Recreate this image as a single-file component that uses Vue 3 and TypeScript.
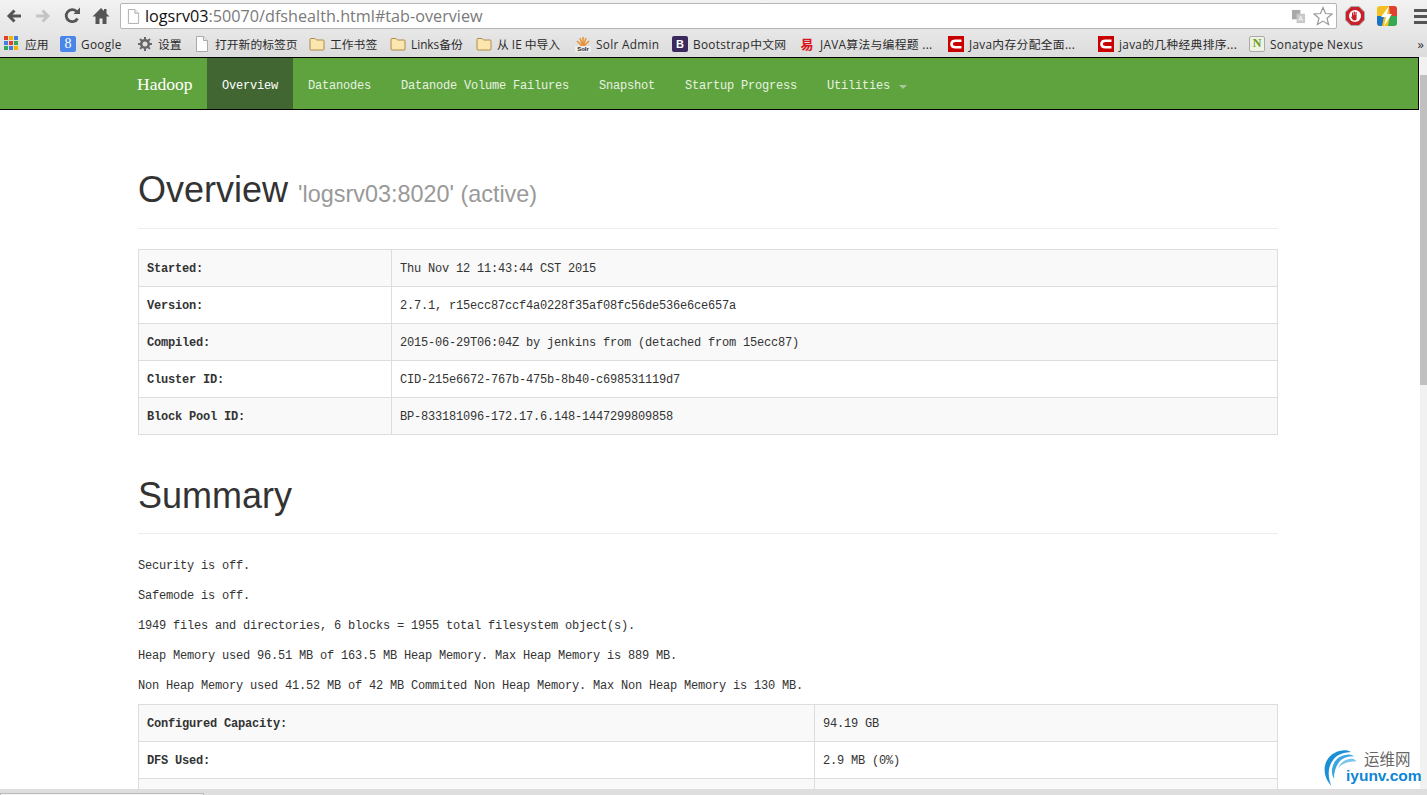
<script setup lang="ts">
interface Bm { icon: string; label: string; width: number; wide?: boolean }
const bookmarks: Bm[] = [
  { icon: 'apps', label: '应用', width: 56 },
  { icon: 'g', label: 'Google', width: 77, wide: true },
  { icon: 'gear', label: '设置', width: 57 },
  { icon: 'doc', label: '打开新的标签页', width: 115 },
  { icon: 'folder', label: '工作书签', width: 81 },
  { icon: 'folder', label: 'Links备份', width: 86 },
  { icon: 'folder', label: '从 IE 中导入', width: 99 },
  { icon: 'solr', label: 'Solr Admin', width: 97, wide: true },
  { icon: 'b', label: 'Bootstrap中文网', width: 127, wide: true },
  { icon: 'yi', label: 'JAVA算法与编程题 ...', width: 149, wide: true },
  { icon: 'c', label: 'Java内存分配全面...', width: 150, wide: true },
  { icon: 'c', label: 'java的几种经典排序...', width: 151, wide: true },
  { icon: 'n', label: 'Sonatype Nexus', width: 120, wide: true },
]
const appColors = ['#e2402f', '#f4b400', '#3f7fe0', '#3f7fe0', '#e2402f', '#34a853', '#34a853', '#3f7fe0', '#f4b400']
const navItems = ['Datanodes', 'Datanode Volume Failures', 'Snapshot', 'Startup Progress']
const overview = [
  ['Started:', 'Thu Nov 12 11:43:44 CST 2015'],
  ['Version:', '2.7.1, r15ecc87ccf4a0228f35af08fc56de536e6ce657a'],
  ['Compiled:', '2015-06-29T06:04Z by jenkins from (detached from 15ecc87)'],
  ['Cluster ID:', 'CID-215e6672-767b-475b-8b40-c698531119d7'],
  ['Block Pool ID:', 'BP-833181096-172.17.6.148-1447299809858'],
]
const summaryLines = [
  'Security is off.',
  'Safemode is off.',
  '1949 files and directories, 6 blocks = 1955 total filesystem object(s).',
  'Heap Memory used 96.51 MB of 163.5 MB Heap Memory. Max Heap Memory is 889 MB.',
  'Non Heap Memory used 41.52 MB of 42 MB Commited Non Heap Memory. Max Non Heap Memory is 130 MB.',
]
const capacity = [
  ['Configured Capacity:', '94.19 GB'],
  ['DFS Used:', '2.9 MB (0%)'],
  ['', ''],
]
</script>

<template>
  <div class="window">
    <header class="toolbar">
      <svg class="tool" viewBox="0 0 20 20"><path d="M17 10H6M10.500 4.500 5 10l5.500 5.500" fill="none" stroke="#555" stroke-width="3" /></svg>
      <svg class="tool" viewBox="0 0 20 20"><path d="M3 10h11M9.500 4.500 15 10l-5.500 5.500" fill="none" stroke="#c4c4c4" stroke-width="3" /></svg>
      <svg class="tool" viewBox="0 0 20 20"><path d="M15.500 12.500A6 6 0 1 1 14.500 5.500" fill="none" stroke="#555" stroke-width="2.800" /><path d="M11.500 8H18V1.500z" fill="#555" /></svg>
      <svg class="tool" viewBox="0 0 20 20"><path d="M10 2 1.500 10.500H4.500V18H8.500V12.500H11.500V18H15.500V10.500H18.500L15.500 7.500V3H13V5z" fill="#555" /></svg>
      <div class="omnibox">
        <svg class="page-icon" viewBox="0 0 14 16"><path d="M1.500.5h7l4 4v11h-11z" fill="#fff" stroke="#aaa" /><path d="M8.500.5v4h4" fill="#eee" stroke="#aaa" /></svg>
        <span class="url"><span class="host">logsrv03</span>:50070/dfshealth.html#tab-overview</span>
        <svg class="translate" viewBox="0 0 16 16"><rect x="1" y="1" width="9" height="10" fill="#a9a9a9" /><rect x="6" y="5" width="9" height="10" fill="#c8c8c8" /><text x="8" y="13" font-size="7" fill="#fff" font-family="Liberation Sans, sans-serif">A</text></svg>
        <svg class="star" viewBox="0 0 20 20"><path d="M10 1.500 12.500 7.500 19 8l-5 4.200 1.600 6.300L10 15.100 4.400 18.500 6 12.200 1 8l6.500-.5z" fill="#fff" stroke="#999" stroke-width="1.200" /></svg>
      </div>
      <svg class="ext first" viewBox="0 0 20 20"><path d="M6 .5h8L19.500 6v8L14 19.500H6L.5 14V6z" fill="#c9212a" stroke="#aaa" /><circle cx="10" cy="10" r="6" fill="#fff" /><path d="M7 9V6.500h1.200V9h.5V5.500h1.200V9h.5V6h1.200v5.500C12 13.500 11 14.500 9.500 14.500 8 14.500 7.500 13.500 6 11L7 10.500z" fill="#c9212a" /></svg>
      <svg class="ext" viewBox="0 0 20 20"><rect width="20" height="20" rx="3" fill="#f4c020" /><path d="M0 10h7L5 20H3a3 3 0 0 1-3-3z" fill="#1a73c8" /><path d="M12 0h5a3 3 0 0 1 3 3v7h-7z" fill="#e2402f" /><path d="M11 20l2-10h7v7a3 3 0 0 1-3 3z" fill="#34a853" /><path d="M12 0 4 11h5l-2 9 8-12h-5z" fill="#fff" /></svg>
      <div class="menu"><i></i><i></i><i></i></div>
    </header>

    <nav class="bookmarks">
      <div v-for="(b, i) in bookmarks" :key="i" class="bm" :style="{ width: b.width + 'px' }">
        <span v-if="b.icon === 'apps'" class="apps"><i v-for="(c, j) in appColors" :key="j" :style="{ background: c }"></i></span>
        <span v-else-if="b.icon === 'g'" class="bm-icon g">8</span>
        <svg v-else-if="b.icon === 'gear'" class="bm-svg" viewBox="0 0 16 16"><circle cx="8" cy="8" r="3.800" fill="none" stroke="#666" stroke-width="2.600" /><path d="M8 1v14M1 8h14M3 3l10 10M13 3 3 13" stroke="#666" stroke-width="2" stroke-dasharray="2.500 9" /></svg>
        <svg v-else-if="b.icon === 'doc'" class="bm-svg" viewBox="0 0 16 16"><path d="M2.500 .5h7l4 4v11h-11z" fill="#fdfdfd" stroke="#aaa" /><path d="M9.500 .5v4h4" fill="#e8e8e8" stroke="#aaa" /></svg>
        <svg v-else-if="b.icon === 'folder'" class="bm-svg" viewBox="0 0 16 16"><path d="M1 3.500Q1 2.500 2 2.500H6L7.500 4H14Q15 4 15 5V13Q15 14 14 14H2Q1 14 1 13z" fill="#fbe7ae" stroke="#b08a4a" /></svg>
        <svg v-else-if="b.icon === 'solr'" class="bm-svg" viewBox="0 0 16 16"><path d="M8 11 2 5M8 11 5 2M8 11 8 1M8 11 11 2M8 11 14 5" stroke="#e8963c" stroke-width="1.600" /><rect x="0" y="10" width="16" height="6" fill="#eee" /><text x="8" y="15" text-anchor="middle" font-size="6" font-weight="700" fill="#222" font-family="Liberation Sans, sans-serif">Solr</text></svg>
        <span v-else-if="b.icon === 'b'" class="bm-icon boot">B</span>
        <span v-else-if="b.icon === 'yi'" class="bm-icon yi">易</span>
        <svg v-else-if="b.icon === 'c'" class="bm-svg" viewBox="0 0 16 16"><rect width="16" height="16" fill="#c80000" /><path d="M13.500 4.800H7.500Q3.500 4.800 3.500 8T7.500 11.200H13.500" fill="none" stroke="#fff" stroke-width="2.600" /></svg>
        <span v-else class="bm-icon nexus">N</span>
        <span class="bm-label" :class="{ wide: b.wide }">{{ b.label }}</span>
      </div>
      <span class="more">»</span>
    </nav>

    <div class="viewport">
      <div class="page">
        <div class="navbar">
          <span class="brand">Hadoop</span>
          <a class="nav-link active">Overview</a>
          <a v-for="n in navItems" :key="n" class="nav-link">{{ n }}</a>
          <a class="nav-link">Utilities<span class="caret"></span></a>
        </div>

        <main class="content">
          <div class="page-header first-header">
            <h1>Overview <small>'logsrv03:8020' (active)</small></h1>
          </div>
          <table class="grid">
            <tr v-for="r in overview" :key="r[0]">
              <th class="col-a">{{ r[0] }}</th>
              <td>{{ r[1] }}</td>
            </tr>
          </table>

          <div class="page-header summary-header">
            <h1>Summary</h1>
          </div>
          <p v-for="l in summaryLines" :key="l" class="line">{{ l }}</p>
          <table class="grid">
            <tr v-for="(r, i) in capacity" :key="i">
              <th class="col-b">{{ r[0] }}</th>
              <td>{{ r[1] }}</td>
            </tr>
          </table>
        </main>
      </div>
      <div class="scrollbar">
        <span class="arrow"></span>
        <div class="thumb"></div>
      </div>
      <div class="watermark">
        <svg class="wm-arc" viewBox="0 0 50 46"><path d="M25 2C10 3 1 14 2 27c.6 7 3 12 8 17C6 35 5 24 11 15 15 9 20 5 33 4 30 2 28 2 25 2z" fill="#1b8fd6" /><path d="M31 7C21 7 13 13 11 23c-1 5 0 9 2 13 0-8 2-15 7-21 4-4 9-6 17-6-2-1-4-2-6-2z" fill="#3aa6e4" /><path d="M35 12c-8 0-14 4-17 11 5-5 11-8 22-8-1-1-3-3-5-3z" fill="#7cc4ee" /></svg>
        <span class="wm-cn">运维网</span>
        <span class="wm-en">iyunv.com</span>
      </div>
    </div>
    <footer class="statusbar"><div class="hscroll"></div></footer>
  </div>
</template>

<style>
html, body { margin: 0; padding: 0; overflow: hidden; background: #fff; }
</style>

<style scoped>
.window { width: 1427px; height: 795px; display: flex; flex-direction: column; overflow: hidden; font-family: "Liberation Mono", monospace; }
.toolbar { height: 33px; flex: none; display: flex; align-items: center; padding: 0 0 1px 4px; box-sizing: border-box; background: linear-gradient(#f2f2f2, #e6e6e6); }
.tool { width: 20px; height: 20px; flex: none; margin-right: 9px; }
.omnibox { width: 1217px; height: 26px; flex: none; box-sizing: border-box; background: #fff; border: 1px solid #b5b5b5; border-radius: 2px; display: flex; align-items: center; padding: 0 3px 0 6px; }
.page-icon { width: 13px; height: 15px; flex: none; }
.url { margin-left: 5px; font: 16.200px "Open Sans", sans-serif; color: #7a7a7a; flex: 1; white-space: nowrap; }
.host { color: #111; }
.translate { width: 15px; height: 15px; margin-right: 7px; }
.star { width: 20px; height: 20px; }
.ext { width: 20px; height: 20px; flex: none; margin-right: 12px; }
.first { margin-left: 8px; }
.menu { display: flex; flex-direction: column; gap: 3px; width: 13px; margin-left: 5px; }
.menu i { height: 3px; background: #555; }
.bookmarks { height: 24px; flex: none; position: relative; display: flex; align-items: center; padding: 0 0 3px 4px; box-sizing: border-box; background: linear-gradient(#e6e6e6, #dcdcdc); white-space: nowrap; }
.bm { display: flex; align-items: center; gap: 5px; flex: none; }
.bm-label { font: 11.800px "Open Sans", "Noto Sans CJK SC", sans-serif; color: #2a2a2a; }
.wide { letter-spacing: .3px; }
.bm-svg, .bm-icon, .apps { width: 16px; height: 16px; flex: none; }
.apps { display: grid; grid-template-columns: repeat(3, 4px); grid-auto-rows: 4px; gap: 1px; }
.apps i { display: block; }
.bm-icon { display: flex; align-items: center; justify-content: center; font: 700 13px "Liberation Sans", sans-serif; color: #fff; border-radius: 2px; }
.g { background: #4a86e8; font: 14px "Liberation Serif", serif; }
.boot { background: #3a2a5e; font-size: 11px; }
.yi { color: #d8141c; font: 700 13px "Noto Sans CJK SC", sans-serif; }
.nexus { background: #eef3e4; color: #6a9a1f; border: 1px solid #aaa; box-sizing: border-box; font: 700 12px "Liberation Serif", serif; }
.more { position: absolute; right: 3px; top: 2px; font: 13px "Open Sans", sans-serif; color: #333; }
.viewport { flex: 1; min-height: 0; display: flex; position: relative; overflow: hidden; }
.page { width: 1420px; flex: none; overflow: hidden; }
.navbar { height: 53px; box-sizing: border-box; margin: 0 1px 0 0; display: flex; padding-left: 137px; background: #5fa33e; border: 1px solid #000; border-left: 0; align-items: stretch; }
.brand { align-self: center; width: 70px; padding-top: 1px; font: 17.500px "Liberation Serif", serif; color: #fff; }
.nav-link { display: flex; align-items: center; padding: 4px 15px 0; font-size: 12px; letter-spacing: -.2px; color: #e8f2e2; white-space: pre; }
.active { background: #426632; color: #fff; }
.caret { display: inline-block; width: 0; height: 0; margin-left: 9px; margin-top: 2px; border: 4px solid transparent; border-top-color: #a8c79a; border-bottom: 0; }
.content { width: 1140px; margin-left: 138px; color: #333; font-size: 12px; letter-spacing: -.2px; }
.page-header { border-bottom: 1px solid #eee; }
h1 { margin: 0; font: 500 36px/40px "Liberation Sans", sans-serif; letter-spacing: 0; color: #333; }
.first-header { margin-top: 57px; height: 62px; margin-bottom: 20px; padding-top: 3px; box-sizing: border-box; }
.summary-header { margin-top: 37px; height: 62px; margin-bottom: 20px; padding-top: 4px; box-sizing: border-box; }
small { font-size: 23.400px; color: #999; font-weight: 400; }
.grid { width: 1140px; border-collapse: collapse; table-layout: fixed; }
.grid th, .grid td { height: 37px; box-sizing: border-box; border: 1px solid #ddd; padding: 2px 8px 0; text-align: left; line-height: 20px; color: #333; }
.grid tr:nth-child(odd) th, .grid tr:nth-child(odd) td { background: #f9f9f9; }
.col-a { width: 253px; box-sizing: border-box; }
.col-b { width: 676px; box-sizing: border-box; }
.line { margin: 0 0 8px; padding-top: 2px; line-height: 20px; }
.scrollbar { width: 7px; flex: none; background: #f1f1f1; position: relative; }
.arrow { display: block; height: 18px; }
.thumb { height: 310px; background: #c0c0c0; }
.statusbar { height: 6px; flex: none; background: #dedede; position: relative; }
.hscroll { position: absolute; left: 0; bottom: 0; width: 204px; height: 2px; background: #f4f4f4; border: 1px solid #bbb; border-bottom: 0; box-sizing: border-box; }
.watermark { position: absolute; right: 2px; bottom: 0; width: 102px; height: 44px; }
.wm-arc { position: absolute; left: 0; top: 2px; width: 42px; height: 42px; }
.wm-cn { position: absolute; left: 41px; top: 2px; font: 15.500px "Noto Sans CJK SC", sans-serif; color: #666; white-space: nowrap; }
.wm-en { position: absolute; left: 23px; top: 22px; font: 700 15.500px "Liberation Sans", sans-serif; color: #0e86d4; white-space: nowrap; }
</style>
